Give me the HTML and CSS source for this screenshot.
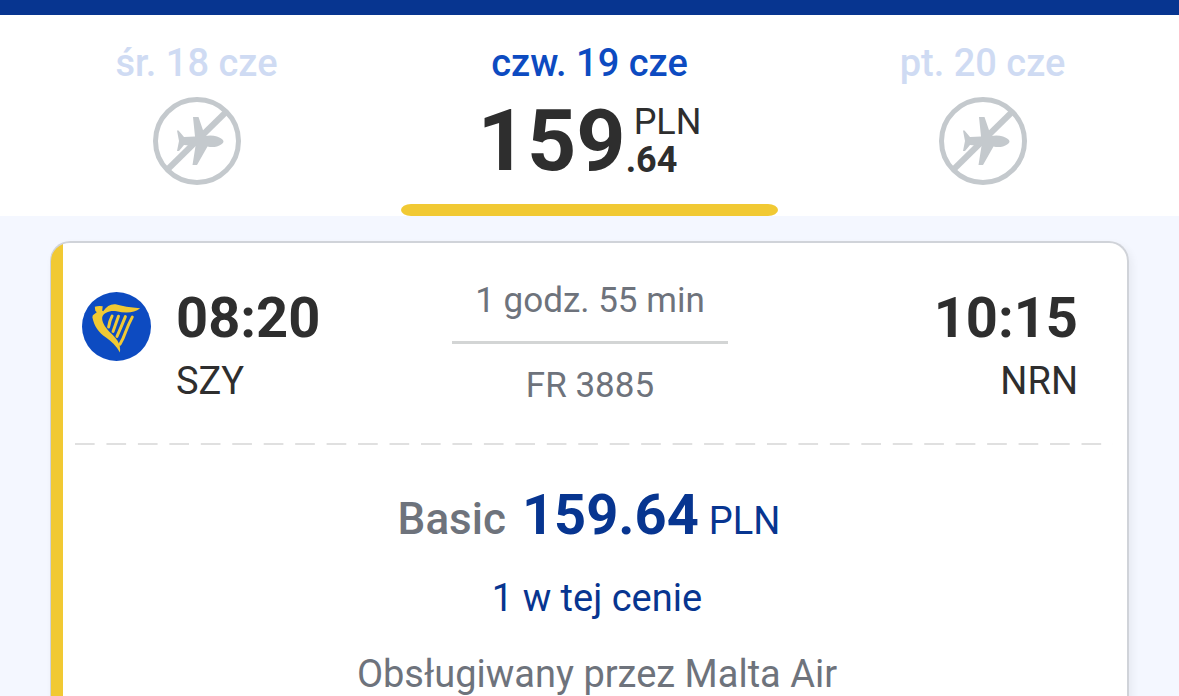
FILE: index.html
```html
<!DOCTYPE html>
<html lang="pl">
<head>
  <meta charset="UTF-8" />
  <meta name="viewport" content="width=device-width, initial-scale=1.0"/>
  <title>Wybierz lot</title>
  <link rel="stylesheet" href="styles.css">
</head>
<body>
  <header class="top-bar"></header>

  <nav class="dates">
    <button type="button" class="date" disabled>
      <span class="date-label">śr. 18 cze</span>
      <svg class="no-flight" viewBox="0 0 88 88" aria-hidden="true">
        <circle cx="44" cy="44" r="41.5" fill="none" stroke="#c4c9cd" stroke-width="5"/>
        <path d="M15 72L73 15" stroke="#c4c9cd" stroke-width="6"/>
        <path d="M24 33.500H25.500L31 40 42 39.500 40 20H45.500L52 39Q59 38 64 39.500 70.500 42 70.500 44.500T64 49.500Q59 50.500 54.500 49.500L44 68H39.500L42.500 49 31 48 26 54H24L26 44z" fill="#c4c9cd"/>
      </svg>
    </button>

    <button type="button" class="date active">
      <span class="date-label">czw. 19 cze</span>
      <span class="price">
        <span class="price-main">159</span>
        <span class="price-side">
          <span class="currency">PLN</span>
          <span class="decimals">.64</span>
        </span>
      </span>
    </button>

    <button type="button" class="date" disabled>
      <span class="date-label">pt. 20 cze</span>
      <svg class="no-flight" viewBox="0 0 88 88" aria-hidden="true">
        <circle cx="44" cy="44" r="41.5" fill="none" stroke="#c4c9cd" stroke-width="5"/>
        <path d="M15 72L73 15" stroke="#c4c9cd" stroke-width="6"/>
        <path d="M24 33.500H25.500L31 40 42 39.500 40 20H45.500L52 39Q59 38 64 39.500 70.500 42 70.500 44.500T64 49.500Q59 50.500 54.500 49.500L44 68H39.500L42.500 49 31 48 26 54H24L26 44z" fill="#c4c9cd"/>
      </svg>
    </button>
  </nav>

  <main class="results">
    <article class="flight-card">
      <div class="flight">
        <div class="departure">
          <svg class="logo" viewBox="0 0 70 70" aria-hidden="true">
            <circle cx="35" cy="35" r="35" fill="#0d4bc1"/>
            <path d="M13 15Q17 13.500 21 14.500L20.500 19 21.500 19.500C25 14.500 29 12 34 12.500Q44 15.500 59 16.500C53 21.500 44 21.500 35 19.500 28 18.500 22 21 20.500 25.500 20 30 23 35 28 40.500 34 46 40 52 38.500 61.500 35 55 30 50 24 46 17 41 12.500 35 10.500 25.500L11 23.500 15 20.500 13.500 19z" fill="#f1c933"/>
            <path d="M30.500 24.500Q28 29 27 35.500M37 24.500Q34 33 31.500 40M44 25Q40 35 35.500 45M51 25.500Q47 33 44 41 42 47 38.500 53" fill="none" stroke="#f1c933" stroke-width="3" stroke-linecap="round"/>
          </svg>
          <div class="stop">
            <time class="time">08:20</time>
            <span class="airport">SZY</span>
          </div>
        </div>

        <div class="route">
          <span class="duration">1 godz. 55 min</span>
          <span class="flight-number">FR 3885</span>
        </div>

        <div class="stop arrival">
          <time class="time">10:15</time>
          <span class="airport">NRN</span>
        </div>
      </div>

      <div class="divider"></div>

      <p class="fare">
        <span class="fare-name">Basic</span>
        <strong class="fare-price">159.64</strong>
        <span class="fare-currency">PLN</span>
      </p>
      <p class="note seats">1 w tej cenie</p>
      <p class="note">Obsługiwany przez Malta Air</p>
    </article>
  </main>
</body>
</html>
```
FILE: styles.css
```css
* {
  box-sizing: border-box;
}

body {
  font-family: Roboto, sans-serif;
  margin: 0;
  min-height: 100vh;
  display: flex;
  flex-direction: column;
  background: #f4f7ff;
  color: #2e2e2e;
}

p {
  margin: 0;
}

.top-bar {
  height: 15px;
  background: #073590;
}

/* date tabs */
.dates {
  display: grid;
  grid-template-columns: repeat(3, 1fr);
  background: #fff;
}

.date {
  display: flex;
  flex-direction: column;
  align-items: center;
  gap: 10px;
  margin: 0 8px;
  padding: 24px 0 19px;
  border: none;
  background: none;
  font-family: inherit;
  color: #2e2e2e;
}

.date.active {
  cursor: pointer;
}

.date.active::after {
  content: "";
  align-self: stretch;
  height: 12px;
  margin: 9px 0 -19px;
  background: #f1c933;
  border-radius: 10px / 6px;
}

.date-label {
  font-size: 38px;
  line-height: 48px;
  font-weight: 500;
  color: #cfdbf3;
}

.active .date-label {
  color: #0d4bc1;
}

.no-flight {
  width: 88px;
  height: 88px;
}

.price {
  display: flex;
  align-items: center;
}

.price-main {
  font-size: 86px;
  line-height: 88px;
  font-weight: 700;
}

.price-side {
  display: flex;
  flex-direction: column;
  align-items: flex-start;
  font-size: 36px;
  line-height: 38px;
}

.currency {
  padding-left: 8px;
}

.decimals {
  font-weight: 700;
}

/* flight card */
.results {
  flex: 1;
  display: flex;
  padding: 25px 50px 0;
}

.flight-card {
  flex: 1;
  border: 2px solid #d0d3d9;
  border-left-width: 1px;
  border-bottom: none;
  border-radius: 20px 20px 0 0;
  background: linear-gradient(to right, #f1c933 12px, #fff 12px);
  box-shadow: 3px 4px 8px rgba(0, 0, 0, 0.06);
}

.flight {
  display: grid;
  grid-template-columns: 1fr 276px 1fr;
  padding: 36px 29px 35px 31px;
}

.departure {
  display: flex;
  gap: 25px;
}

.logo {
  width: 69px;
  height: 69px;
  margin-top: 13px;
}

.stop {
  display: flex;
  flex-direction: column;
}

.arrival {
  align-items: flex-end;
  padding-right: 20px;
}

.time {
  font-size: 56px;
  line-height: 78px;
  font-weight: 700;
}

.airport {
  font-size: 38px;
  line-height: 48px;
}

.route {
  text-align: center;
  font-size: 35px;
  line-height: 44px;
  color: #6e737c;
}

.duration,
.flight-number {
  display: block;
}

.duration {
  padding-bottom: 18px;
  border-bottom: 3px solid #d3d5d5;
}

.flight-number {
  padding-top: 20px;
}

.divider {
  height: 2px;
  margin: 0 14px 0 24px;
  background: linear-gradient(to right, #e0e0e0 61%, transparent 61%) 0 0 / 31px 2px round;
}

.fare {
  display: flex;
  justify-content: center;
  align-items: baseline;
  padding-top: 41px;
  line-height: 58px;
  color: #073590;
}

.fare-name {
  margin-right: 16px;
  font-size: 44px;
  font-weight: 500;
  color: #6e737c;
}

.fare-price {
  margin-right: 10px;
  font-size: 56px;
}

.fare-currency {
  font-size: 38px;
}

.note {
  padding: 20px 0 0 16px;
  font-size: 38px;
  line-height: 56px;
  text-align: center;
  color: #6e737c;
}

.seats {
  color: #073590;
}
```
